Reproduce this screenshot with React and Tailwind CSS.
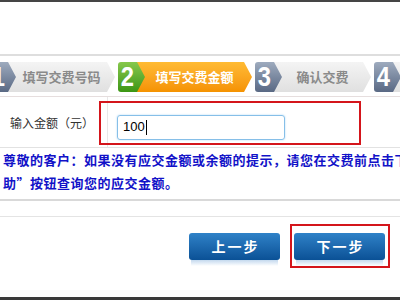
import React from "react";

function Step({ num, label, w, active }) {
  return (
    <div className="flex h-[30px] shrink-0">
      <div
        className={
          "relative z-10 w-[27px] h-[30px] shrink-0 rounded-l-[3px] [clip-path:polygon(0_0,19px_0,27px_50%,19px_100%,0_100%)] flex items-center " +
          (active
            ? "bg-linear-to-b from-[#86c84c] to-[#3c9612]"
            : "bg-linear-to-b from-[#9eabbe] to-[#5a6984]")
        }
      >
        <span className="w-[19px] text-center text-white font-bold text-[28px] leading-none font-['Liberation_Sans',Arial,sans-serif] scale-x-85">
          {num}
        </span>
      </div>
      <div
        style={{ width: w }}
        className={
          "-ml-[8px] h-[30px] shrink-0 pl-[8px] pr-[8px] flex items-center justify-center whitespace-nowrap text-[13px] font-bold [clip-path:polygon(0_0,calc(100%_-_8px)_0,100%_50%,calc(100%_-_8px)_100%,0_100%)] " +
          (active
            ? "bg-linear-to-b from-[#ffbb33] to-[#f59200] text-white"
            : "bg-linear-to-b from-[#f4f4f4] to-[#e0e0e0] text-[#8a8a8a]")
        }
      >
        {label}
      </div>
    </div>
  );
}

function BlueButton({ children }) {
  return (
    <div className="flex flex-col w-[91px]">
      <div className="h-[27px] rounded-[3px] bg-linear-to-b from-[#2f82c8] to-[#0a5196] flex items-center justify-center text-white font-bold text-[14px] tracking-[2px] pl-[2px]">
        {children}
      </div>
      <div className="h-[6px] mx-[2px] bg-linear-to-b from-[#c4d9ee] to-white" />
    </div>
  );
}

export default function App() {
  return (
    <div className="w-[400px] h-[300px] bg-white overflow-hidden flex flex-col font-['Noto_Sans_CJK_SC',sans-serif]">
      <div className="h-[2px] bg-[#454545] shrink-0" />
      <div className="h-[52px] shrink-0" />
      <div className="h-[2px] bg-[#dedede] shrink-0" />
      <div className="h-[6px] shrink-0" />
      <div className="flex gap-[3px] -ml-[11px] h-[30px] shrink-0">
        <Step num="1" label="填写交费号码" w={107} />
        <Step num="2" label="填写交费金额" w={115} active />
        <Step num="3" label="确认交费" w={97} />
        <Step num="4" label="在线交费" w={98} />
      </div>
      <div className="h-[4px] shrink-0" />
      <div className="h-px bg-[#e6dede] shrink-0" />
      <div className="relative h-[51px] shrink-0 flex border-b border-[#e2e2e2]">
        <div className="w-[108px] border-r border-[#e8e8e8] flex items-center pl-[10px] text-[12px] text-[#333] whitespace-nowrap pt-[2px]">
          输入金额（元）
        </div>
        <div className="flex items-center pl-[9px] pt-[10px]">
          <div className="w-[168px] h-[25px] rounded-[3px] border border-[#86bfe8] shadow-[0_0_2px_#a8d4f4] flex items-center pl-[5px] text-[13px] text-black font-['Liberation_Sans',Arial,sans-serif]">
            100
            <span className="w-px h-[15px] bg-black ml-px" />
          </div>
        </div>
        <div className="absolute left-[99px] top-[4px] w-[262px] h-[44px] border-2 border-[#d4151b]" />
      </div>
      <div className="px-[3px] text-[13px] font-bold leading-[23px] tracking-[0.5px] text-[#1212c8] whitespace-nowrap shrink-0">
        <div>尊敬的客户：如果没有应交金额或余额的提示，请您在交费前点击下方“帮</div>
        <div>助”按钮查询您的应交金额。</div>
      </div>
      <div className="h-[5px] shrink-0" />
      <div className="h-[2px] bg-[#d9d9d9] shrink-0" />
      <div className="h-[15px] shrink-0" />
      <div className="h-px bg-[#e4e4e4] shrink-0" />
      <div className="flex justify-end gap-[14px] pr-[15px] pt-[16px] shrink-0">
        <BlueButton>上一步</BlueButton>
        <div className="relative">
          <BlueButton>下一步</BlueButton>
          <div className="absolute -left-[4px] -top-[9px] w-[100px] h-[44px] border-2 border-[#d4151b]" />
        </div>
      </div>
      <div className="flex-1" />
      <div className="h-[3px] bg-[#3a3a3a] shrink-0" />
    </div>
  );
}
